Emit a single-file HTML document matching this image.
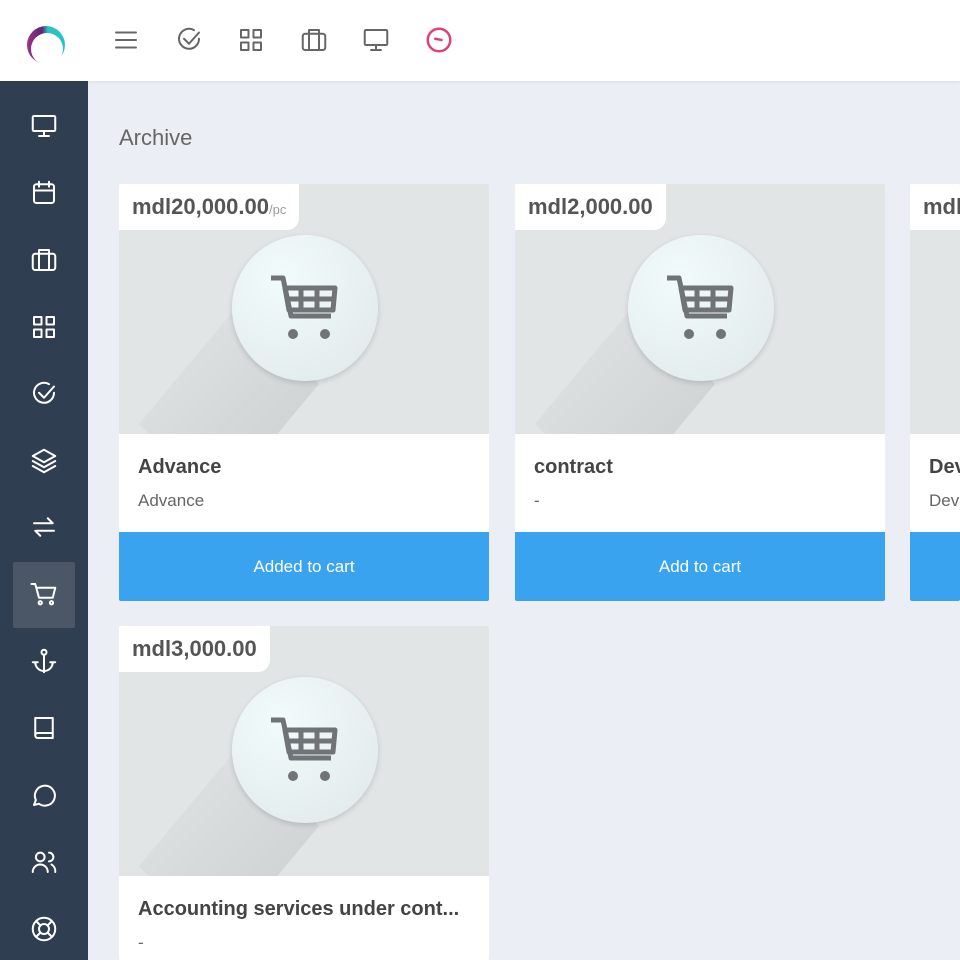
<!DOCTYPE html>
<html><head><meta charset="utf-8"><style>
*{margin:0;padding:0;box-sizing:border-box}
html,body{width:960px;height:960px;overflow:hidden}
body{background:#eceef6;font-family:"Liberation Sans","DejaVu Sans",sans-serif;position:relative}
.top{position:absolute;left:0;top:0;width:960px;height:81px;background:#fff;box-shadow:0 1px 3px rgba(0,0,0,.08)}
.side{position:absolute;left:0;top:81px;width:88px;height:879px;background:#2f3e50}
.ico{position:absolute;width:30px;height:30px}
.ico svg{width:30px;height:30px;fill:none;stroke:#fff;stroke-width:1.6;stroke-linecap:round;stroke-linejoin:round}
.tico svg{stroke:#666}
h1{position:absolute;left:119px;top:125px;font-size:22px;font-weight:normal;color:#666}
.card{position:absolute;width:370px;height:417px;background:#fff;overflow:hidden;border-radius:2px}
.img{position:absolute;left:0;top:0;width:100%;height:250px;background:#e1e5e6;overflow:hidden}
.shadow{position:absolute;left:20px;top:120px;width:180px;height:200px;background:linear-gradient(135deg,rgba(0,0,0,0),rgba(0,0,0,.1));clip-path:polygon(100px 0,180px 80px,80px 200px,0 120px)}
.circ{position:absolute;left:113px;top:51px;width:146px;height:146px;border-radius:50%;background:radial-gradient(circle at 35% 30%,#f2fbfb,#dfe8e8);box-shadow:0 2px 6px rgba(0,0,0,.15)}
.price{position:absolute;left:0;top:0;height:46px;background:#fff;border-bottom-right-radius:12px;padding:10px 13px;font-size:22px;font-weight:bold;color:#555}
.price small{font-size:13px;font-weight:normal;color:#999}
.t{position:absolute;left:19px;top:272px;font-size:20px;font-weight:bold;color:#444;white-space:nowrap}
.s{position:absolute;left:19px;top:307px;font-size:17px;color:#666}
.btn{position:absolute;left:0;top:348px;width:100%;height:69px;background:#3aa3ef;color:#fff;font-size:17px;text-align:center;line-height:69px}
</style></head><body>
<div class="top">
<svg style="position:absolute;left:25px;top:25px" width="42" height="40" viewBox="0 0 42 40"><defs><linearGradient id="g" x1="0" y1="0" x2="1" y2="0"><stop offset="0" stop-color="#a0308c"/><stop offset="0.4" stop-color="#5a2a70"/><stop offset="0.55" stop-color="#2bc2c6"/></linearGradient></defs><circle cx="21" cy="20" r="19" fill="url(#g)"/><circle cx="22" cy="24" r="16" fill="#fff"/></svg>
<div class="ico tico" style="left:111px;top:25px"><svg viewBox="0 0 24 24"><path d="M4 6h16M4 12h16M4 18h16"/></svg></div>
<div class="ico tico" style="left:174px;top:25px"><svg viewBox="0 0 24 24"><path d="M20 11a8 8 0 1 1-4-6.9"/><path d="M8 11l4 4 8-9"/></svg></div>
<div class="ico tico" style="left:236px;top:25px"><svg viewBox="0 0 24 24"><rect x="4" y="4" width="6" height="6"/><rect x="14" y="4" width="6" height="6"/><rect x="4" y="14" width="6" height="6"/><rect x="14" y="14" width="6" height="6"/></svg></div>
<div class="ico tico" style="left:299px;top:25px"><svg viewBox="0 0 24 24"><rect x="3" y="7" width="18" height="13" rx="2"/><path d="M8 7V4h8v3M8 7v13M16 7v13"/></svg></div>
<div class="ico tico" style="left:361px;top:25px"><svg viewBox="0 0 24 24"><rect x="3" y="4" width="18" height="12" rx="1"/><path d="M12 16v4M8 20h8"/></svg></div>
<div class="ico" style="left:424px;top:25px"><svg viewBox="0 0 24 24" style="stroke:#e0407a;stroke-width:2"><circle cx="12" cy="12" r="9"/><path d="M9 11l5 1"/></svg></div>
</div>
<div class="side">
<div style="position:absolute;left:13px;top:481px;width:62px;height:66px;background:#4b5767;border-radius:2px"></div>
</div>
<div class="ico" style="left:29px;top:111px"><svg viewBox="0 0 24 24"><rect x="3" y="4" width="18" height="12" rx="1"/><path d="M12 16v4M8 20h8"/></svg></div>
<div class="ico" style="left:29px;top:178px"><svg viewBox="0 0 24 24"><rect x="4" y="5" width="16" height="15" rx="2"/><path d="M4 10h16M8 3v4M16 3v4"/></svg></div>
<div class="ico" style="left:29px;top:245px"><svg viewBox="0 0 24 24"><rect x="3" y="7" width="18" height="13" rx="2"/><path d="M8 7V4h8v3M8 7v13M16 7v13"/></svg></div>
<div class="ico" style="left:29px;top:312px"><svg viewBox="0 0 24 24"><rect x="4" y="4" width="6" height="6"/><rect x="14" y="4" width="6" height="6"/><rect x="4" y="14" width="6" height="6"/><rect x="14" y="14" width="6" height="6"/></svg></div>
<div class="ico" style="left:29px;top:379px"><svg viewBox="0 0 24 24"><path d="M20 11a8 8 0 1 1-4-6.9"/><path d="M8 11l4 4 8-9"/></svg></div>
<div class="ico" style="left:29px;top:446px"><svg viewBox="0 0 24 24"><path d="M12 3l9 5-9 5-9-5z"/><path d="M3 12l9 5 9-5M3 16l9 5 9-5"/></svg></div>
<div class="ico" style="left:29px;top:512px"><svg viewBox="0 0 24 24"><path d="M4 9h15l-4-4M20 15H5l4 4"/></svg></div>
<div class="ico" style="left:29px;top:579px"><svg viewBox="0 0 24 24"><path d="M2 4h3l3 11h11l2-8H7"/><circle cx="9" cy="19" r="1.3"/><circle cx="18" cy="19" r="1.3"/></svg></div>
<div class="ico" style="left:29px;top:646px"><svg viewBox="0 0 24 24"><circle cx="12" cy="5" r="2"/><path d="M12 7v14M5 13a7 7 0 0 0 14 0M3 13h4M17 13h4"/></svg></div>
<div class="ico" style="left:29px;top:713px"><svg viewBox="0 0 24 24"><path d="M5 4h14v16H7a2 2 0 0 1-2-2zM5 18a2 2 0 0 1 2-2h12"/></svg></div>
<div class="ico" style="left:29px;top:780px"><svg viewBox="0 0 24 24"><path d="M4 20l1.5-4A8 8 0 1 1 8 19z"/></svg></div>
<div class="ico" style="left:29px;top:847px"><svg viewBox="0 0 24 24"><circle cx="9" cy="8" r="3.5"/><path d="M3 20a6 6 0 0 1 12 0M16 4.5a3.5 3.5 0 0 1 0 7M18 14a6 6 0 0 1 3 6"/></svg></div>
<div class="ico" style="left:29px;top:914px"><svg viewBox="0 0 24 24"><circle cx="12" cy="12" r="9"/><circle cx="12" cy="12" r="4"/><path d="M6 6l3 3M18 6l-3 3M6 18l3-3M18 18l-3-3"/></svg></div>

<h1>Archive</h1>

<div class="card" style="left:119px;top:184px">
<div class="img"><div class="shadow"></div><div class="circ"></div>
<svg style="position:absolute;left:150px;top:90px" width="70" height="68" viewBox="0 0 70 68" fill="none" stroke="#707478" stroke-width="5" stroke-linejoin="round"><path d="M2 4h12l8 38h40"/><path d="M16 14h50l-2 22H20zM32 14v22M48 14v22M18 25h46"/><circle cx="24" cy="60" r="5" fill="#707478" stroke="none"/><circle cx="56" cy="60" r="5" fill="#707478" stroke="none"/></svg>
<div class="price">mdl20,000.00<small>/pc</small></div></div>
<div class="t">Advance</div><div class="s">Advance</div><div class="btn">Added to cart</div></div>

<div class="card" style="left:515px;top:184px">
<div class="img"><div class="shadow"></div><div class="circ"></div>
<svg style="position:absolute;left:150px;top:90px" width="70" height="68" viewBox="0 0 70 68" fill="none" stroke="#707478" stroke-width="5" stroke-linejoin="round"><path d="M2 4h12l8 38h40"/><path d="M16 14h50l-2 22H20zM32 14v22M48 14v22M18 25h46"/><circle cx="24" cy="60" r="5" fill="#707478" stroke="none"/><circle cx="56" cy="60" r="5" fill="#707478" stroke="none"/></svg>
<div class="price">mdl2,000.00</div></div>
<div class="t">contract</div><div class="s">-</div><div class="btn">Add to cart</div></div>

<div class="card" style="left:910px;top:184px;width:50px">
<div class="img"><div class="price">mdl</div></div>
<div class="t">Dev</div><div class="s">Dev</div><div class="btn"></div></div>

<div class="card" style="left:119px;top:626px;height:334px">
<div class="img"><div class="shadow"></div><div class="circ"></div>
<svg style="position:absolute;left:150px;top:90px" width="70" height="68" viewBox="0 0 70 68" fill="none" stroke="#707478" stroke-width="5" stroke-linejoin="round"><path d="M2 4h12l8 38h40"/><path d="M16 14h50l-2 22H20zM32 14v22M48 14v22M18 25h46"/><circle cx="24" cy="60" r="5" fill="#707478" stroke="none"/><circle cx="56" cy="60" r="5" fill="#707478" stroke="none"/></svg>
<div class="price">mdl3,000.00</div></div>
<div class="t">Accounting services under cont...</div><div class="s">-</div></div>
</body></html>
